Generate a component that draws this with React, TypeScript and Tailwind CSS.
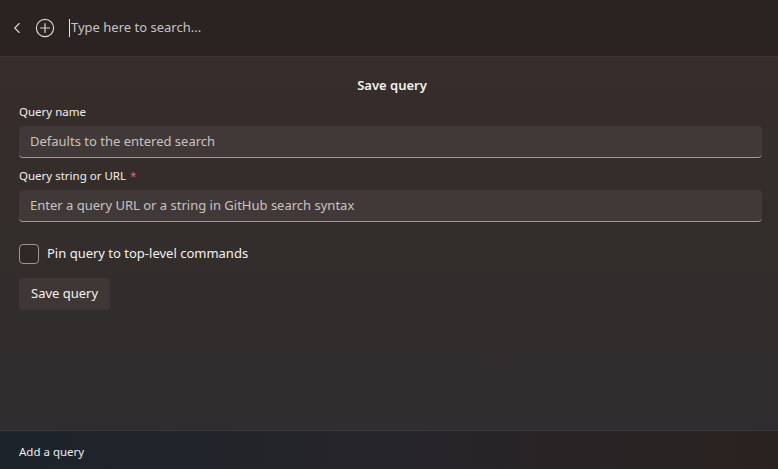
import { ChevronLeft } from "lucide-react";

const font = { fontFamily: '"Noto Sans", "Open Sans", sans-serif' };

const Field = ({ label, required, placeholder }: { label: string; required?: boolean; placeholder: string }) => (
  <div className="flex flex-col">
    <label className="text-[11.5px] text-[#f2efee] leading-4 mb-[6px]">
      {label}
      {required && <span className="text-[#e0626a] ml-[4px]">*</span>}
    </label>
    <div className="h-[32px] rounded-[4px] bg-[#433b38]/90 border-b border-[#a29b98] flex items-center px-[11px]">
      <span className="text-[13px] text-[#c9c3c0]">{placeholder}</span>
    </div>
  </div>
);

export default function App() {
  return (
    <div style={font} className="w-[778px] h-[469px] flex flex-col overflow-hidden text-[#f4f1f0] bg-[#2b2523]">
      <div className="h-[57px] shrink-0 flex items-center bg-[#2a2321] border-b border-[#3e3634] pl-[8px]">
        <ChevronLeft size={18} strokeWidth={1.5} className="text-[#d8d4d2]" />
        <svg width="20" height="20" viewBox="0 0 20 20" className="ml-[9px] text-[#d8d4d2]">
          <circle cx="10" cy="10" r="8.6" fill="none" stroke="currentColor" strokeWidth="1.2" />
          <path d="M10 5.5v9M5.5 10h9" stroke="currentColor" strokeWidth="1.2" strokeLinecap="round" />
        </svg>
        <div className="ml-[14px] w-px h-[18px] bg-[#e8e4e2]" />
        <span className="text-[13px] text-[#c8c3c1] ml-[1px]">Type here to search...</span>
      </div>

      <div className="flex-1 bg-linear-to-b from-[#372d2a] via-[#332d2b] to-[#2f2d2f] pl-[19px] pr-[16px] pt-[18px] flex flex-col">
        <div className="text-center text-[13px] font-semibold leading-5 mb-[9px] pl-[3px]">Save query</div>
        <div className="flex flex-col gap-[10px]">
          <Field label="Query name" placeholder="Defaults to the entered search" />
          <Field label="Query string or URL" required placeholder="Enter a query URL or a string in GitHub search syntax" />
        </div>
        <div className="flex items-center mt-[22px]">
          <div className="w-[20px] h-[20px] rounded-[4px] border border-[#9d9694] bg-[#2f2826]" />
          <span className="ml-[8px] text-[13px]">Pin query to top-level commands</span>
        </div>
        <button className="mt-[14px] self-start h-[32px] px-[12px] rounded-[4px] bg-[#3e3735] text-[13px] text-[#f4f1f0]">
          Save query
        </button>
      </div>

      <div className="h-[39px] shrink-0 border-t border-[#3b3a3b] bg-linear-to-r from-[#1c232a] via-[#26252a] to-[#2a2220] flex items-start pt-[13px] px-[19px]">
        <span className="text-[11.5px] leading-4 text-[#eeeceb]">Add a query</span>
      </div>
    </div>
  );
}
